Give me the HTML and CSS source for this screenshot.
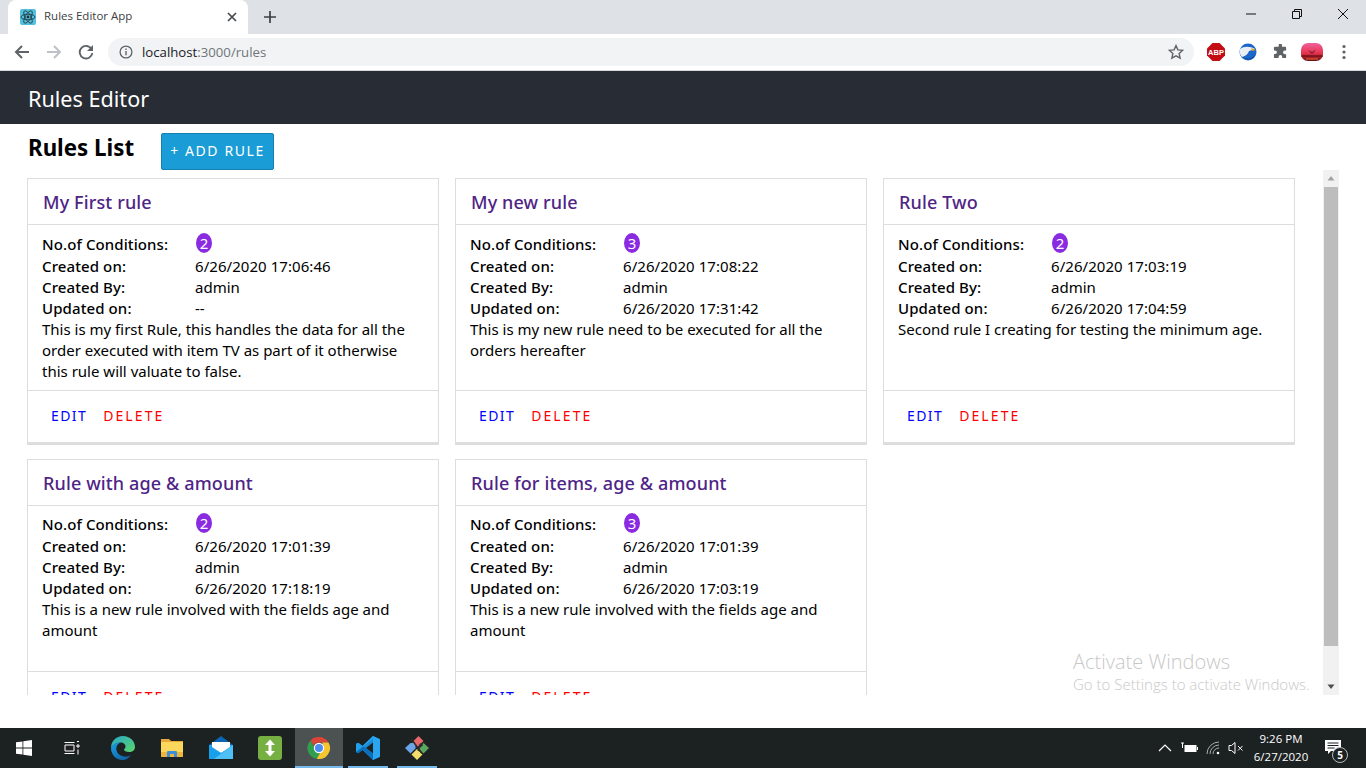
FILE: index.html
```html
<!DOCTYPE html>
<html lang="en">
<head>
<meta charset="utf-8">
<title>Rules Editor App</title>
<link rel="stylesheet" href="styles.css">
</head>
<body>
<div class="tabstrip">
  <div class="tab">
    <svg class="favicon" viewBox="0 0 16 16"><rect width="16" height="16" rx="2" fill="#53c1de"/><g fill="none" stroke="#20343c" stroke-width=".8"><ellipse cx="8" cy="8" rx="7" ry="2.8"/><ellipse cx="8" cy="8" rx="7" ry="2.8" transform="rotate(60 8 8)"/><ellipse cx="8" cy="8" rx="7" ry="2.8" transform="rotate(120 8 8)"/></g><circle cx="8" cy="8" r="1.4" fill="#20343c"/></svg>
    <span class="tab-title">Rules Editor App</span>
    <svg class="tab-close" viewBox="0 0 10 10"><path d="M1 1l8 8M9 1l-8 8" stroke="#45494d" stroke-width="1.7" fill="none"/></svg>
  </div>
  <svg class="newtab" viewBox="0 0 12 12"><path d="M6 0v12M0 6h12" stroke="#3c4043" stroke-width="1.7" fill="none"/></svg>
  <div class="winctrls">
    <svg class="winbtn" viewBox="0 0 12 12"><path d="M1 6h10" stroke="#111" stroke-width="1" fill="none"/></svg>
    <svg class="winbtn" viewBox="0 0 12 12"><path d="M1.5 3.5h7v7h-7zM3.5 3.5v-2h7v7h-2" stroke="#111" stroke-width="1" fill="none"/></svg>
    <svg class="winbtn" viewBox="0 0 12 12"><path d="M1 1l10 10M11 1l-10 10" stroke="#111" stroke-width="1" fill="none"/></svg>
  </div>
</div>
<div class="toolbar">
  <svg class="navicon" viewBox="0 0 16 16"><path d="M15 8H2.5M8 2L2 8l6 6" stroke="#5f6368" stroke-width="2" fill="none"/></svg>
  <svg class="navicon" viewBox="0 0 16 16"><path d="M1 8h12.5M8 2l6 6-6 6" stroke="#bdc1c6" stroke-width="2" fill="none"/></svg>
  <svg class="navicon" viewBox="0 0 16 16"><path d="M13.6 5.2A6.3 6.3 0 1 0 14.3 9" stroke="#5f6368" stroke-width="1.9" fill="none"/><path d="M15 1v6H9z" fill="#5f6368"/></svg>
  <div class="omnibox">
    <svg class="info" viewBox="0 0 14 14"><circle cx="7" cy="7" r="5.9" stroke="#5f6368" stroke-width="1.3" fill="none"/><path d="M7 6v4.2M7 3.6v1.4" stroke="#5f6368" stroke-width="1.4"/></svg>
    <span class="url"><span class="url-host">localhost</span>:3000/rules</span>
    <svg class="star" viewBox="0 0 16 16"><path d="M8 1.6l1.9 4.3 4.7.5-3.5 3.1 1 4.6L8 11.8l-4.1 2.3 1-4.6L1.4 6.4l4.7-.5z" stroke="#5f6368" stroke-width="1.4" fill="none"/></svg>
  </div>
  <div class="exts">
    <svg class="ext" viewBox="0 0 18 18"><path d="M5.5 0h7L18 5.5v7L12.5 18h-7L0 12.5v-7z" fill="#c30d12"/><text x="9" y="12" class="abp">ABP</text></svg>
    <svg class="ext" viewBox="0 0 18 18"><circle cx="9" cy="9" r="8.5" fill="#1b66c9"/><path d="M1 6c4-3 10-3 15 0l-6 2c-1 3-3 5-7 6-2-2-3-5-2-8z" fill="#e9eef5"/><path d="M12 5l5 2-4 1z" fill="#e8a21a"/><path d="M4 14c3 2 8 3 12-2-2 5-9 6-12 2z" fill="#0c3a86"/></svg>
    <svg class="ext puzzle" viewBox="0 0 16 16"><path d="M6 1.5a1.8 1.8 0 0 1 3.6 0V3H13a1 1 0 0 1 1 1v3h-1.4a1.9 1.9 0 0 0 0 3.8H14V14a1 1 0 0 1-1 1H9.8v-1.4a1.9 1.9 0 0 0-3.8 0V15H2a1 1 0 0 1-1-1v-3.4h1.3a1.9 1.9 0 0 0 0-3.8H1V4a1 1 0 0 1 1-1h4z" fill="#5f6368"/></svg>
    <svg class="ext avatar" viewBox="0 0 22 18"><defs><linearGradient id="sky" x1="0" y1="0" x2="0" y2="1"><stop offset="0" stop-color="#f0609f"/><stop offset=".5" stop-color="#e83a58"/><stop offset=".72" stop-color="#c9232f"/><stop offset="1" stop-color="#5c1015"/></linearGradient></defs><rect width="22" height="18" rx="7" fill="url(#sky)"/><path d="M0 12.500h22v1H0z" fill="#3d0c12"/><path d="M7 7l4 2 4-2.500-3 4h-2z" fill="#8c1c34"/><path d="M5 15.500h12v1H5z" fill="#f06a3a"/></svg>
    <svg class="ext dots" viewBox="0 0 4 16"><circle cx="2" cy="2.5" r="1.6" fill="#5f6368"/><circle cx="2" cy="8" r="1.6" fill="#5f6368"/><circle cx="2" cy="13.5" r="1.6" fill="#5f6368"/></svg>
  </div>
</div>
<header class="app-header">Rules Editor</header>
<main class="content">
  <div class="title-row">
    <h1 class="page-title">Rules List</h1>
    <button class="add-btn">+ ADD RULE</button>
  </div>
  <div class="scroll-row">
    <div class="cards">
      <article class="card">
        <h2 class="card-title">My First rule</h2>
        <div class="card-body">
          <div class="row first"><span class="label">No.of Conditions:</span><span class="badge">2</span></div>
          <div class="row"><span class="label">Created on:</span><span class="date">6/26/2020 17:06:46</span></div>
          <div class="row"><span class="label">Created By:</span><span>admin</span></div>
          <div class="row"><span class="label">Updated on:</span><span>--</span></div>
          <p class="desc">This is my first Rule, this handles the data for all the order executed with item TV as part of it otherwise this rule will valuate to false.</p>
        </div>
        <div class="card-foot"><a class="edit">EDIT</a><a class="del">DELETE</a></div>
      </article>
      <article class="card">
        <h2 class="card-title">My new rule</h2>
        <div class="card-body">
          <div class="row first"><span class="label">No.of Conditions:</span><span class="badge">3</span></div>
          <div class="row"><span class="label">Created on:</span><span class="date">6/26/2020 17:08:22</span></div>
          <div class="row"><span class="label">Created By:</span><span>admin</span></div>
          <div class="row"><span class="label">Updated on:</span><span class="date">6/26/2020 17:31:42</span></div>
          <p class="desc">This is my new rule need to be executed for all the orders hereafter</p>
        </div>
        <div class="card-foot"><a class="edit">EDIT</a><a class="del">DELETE</a></div>
      </article>
      <article class="card">
        <h2 class="card-title">Rule Two</h2>
        <div class="card-body">
          <div class="row first"><span class="label">No.of Conditions:</span><span class="badge">2</span></div>
          <div class="row"><span class="label">Created on:</span><span class="date">6/26/2020 17:03:19</span></div>
          <div class="row"><span class="label">Created By:</span><span>admin</span></div>
          <div class="row"><span class="label">Updated on:</span><span class="date">6/26/2020 17:04:59</span></div>
          <p class="desc">Second rule I creating for testing the minimum age.</p>
        </div>
        <div class="card-foot"><a class="edit">EDIT</a><a class="del">DELETE</a></div>
      </article>
      <article class="card">
        <h2 class="card-title">Rule with age &amp; amount</h2>
        <div class="card-body">
          <div class="row first"><span class="label">No.of Conditions:</span><span class="badge">2</span></div>
          <div class="row"><span class="label">Created on:</span><span class="date">6/26/2020 17:01:39</span></div>
          <div class="row"><span class="label">Created By:</span><span>admin</span></div>
          <div class="row"><span class="label">Updated on:</span><span class="date">6/26/2020 17:18:19</span></div>
          <p class="desc">This is a new rule involved with the fields age and amount</p>
        </div>
        <div class="card-foot"><a class="edit">EDIT</a><a class="del">DELETE</a></div>
      </article>
      <article class="card">
        <h2 class="card-title">Rule for items, age &amp; amount</h2>
        <div class="card-body">
          <div class="row first"><span class="label">No.of Conditions:</span><span class="badge">3</span></div>
          <div class="row"><span class="label">Created on:</span><span class="date">6/26/2020 17:01:39</span></div>
          <div class="row"><span class="label">Created By:</span><span>admin</span></div>
          <div class="row"><span class="label">Updated on:</span><span class="date">6/26/2020 17:03:19</span></div>
          <p class="desc">This is a new rule involved with the fields age and amount</p>
        </div>
        <div class="card-foot"><a class="edit">EDIT</a><a class="del">DELETE</a></div>
      </article>
    </div>
    <div class="scrollbar">
      <svg class="arrow" viewBox="0 0 16 16"><path d="M4.5 10L8 5.5l3.500 4.500z" fill="#a3a3a3"/></svg>
      <div class="thumb"></div>
      <svg class="arrow arrow-down" viewBox="0 0 16 16"><path d="M4.500 6L8 10.500 11.500 6z" fill="#505050"/></svg>
    </div>
  </div>
  <div class="activate">
    <div class="activate-big">Activate Windows</div>
    <div class="activate-small">Go to Settings to activate Windows.</div>
  </div>
</main>
<footer class="taskbar">
  <div class="task-left">
    <div class="tb-item"><svg class="tb-16" viewBox="0 0 16 16"><path d="M0 2.300l6.500-.9v6.200H0zM7.300 1.300L16 0v7.600H7.300zM0 8.400h6.500v6.200L0 13.700zM7.300 8.400H16V16l-8.700-1.200z" fill="#fff"/></svg></div>
    <div class="tb-item"><svg class="tb-16" viewBox="0 0 16 16"><path d="M.5 2.500h10M.5 13.500h10M1 5h9v6H1zM13 1.500h2M13 5h2v2h-2zM14 9.500v5" stroke="#fff" stroke-width="1" fill="none"/></svg></div>
    <div class="tb-gap"></div>
    <div class="tb-item"><svg class="tb-24" viewBox="0 0 24 24"><defs><linearGradient id="eb" x1="0" y1="0" x2="1" y2="1"><stop offset="0" stop-color="#1b9de2"/><stop offset="1" stop-color="#0c5a9e"/></linearGradient><linearGradient id="eg" x1="0" y1="0" x2="1" y2="1"><stop offset="0" stop-color="#2aa8c8"/><stop offset="1" stop-color="#5ad66a"/></linearGradient></defs><path d="M12 0c7 0 12 5 12 11 0 3-2.500 5-6 5-3 0-5-1-5-2.500 0-1 1.500-1 1.500-3C14.500 8 12 6.500 9.500 6.500 5 6.500 1 9.500 0 12 0 5 5 0 12 0z" fill="url(#eg)"/><path d="M0 12c1-3 5-6 9.500-5.500C6 8 5 11 5.500 14c.7 4 4.500 6.500 9 6.500 2 0 3.700-.5 5.500-1.500-2 3-5 5-8.500 5C5 24 0 18.500 0 12z" fill="url(#eb)"/></svg></div>
    <div class="tb-item"><svg class="tb-24" viewBox="0 0 24 24"><path d="M1 3h8l2 2h12v3H1z" fill="#e8a93a"/><path d="M1 6h22v14a1 1 0 0 1-1 1H2a1 1 0 0 1-1-1z" fill="#fbd75b"/><path d="M1 16h22v4a1 1 0 0 1-1 1H2a1 1 0 0 1-1-1z" fill="#eeb53e"/><path d="M7 21v-5a1 1 0 0 1 1-1h8a1 1 0 0 1 1 1v5h-3v-3h-4v3z" fill="#3f8fd8"/></svg></div>
    <div class="tb-item"><svg class="tb-24" viewBox="0 0 24 24"><path d="M0 9l12-9 12 9v1H0z" fill="#0c66b5"/><path d="M0 9h24v14H0z" fill="#2aa3ee"/><path d="M3 6h18v6l-9 5-9-5z" fill="#fff"/><path d="M0 9l12 8 12-8v14H0z" fill="#18a0ec"/><path d="M24 9v14H5z" fill="#4fc0f6"/></svg></div>
    <div class="tb-item"><svg class="tb-24" viewBox="0 0 24 24"><rect width="24" height="24" rx="3" fill="#76b043"/><path d="M12 3.500l5 5.500h-3.500v6H17l-5 5.500L7 15h3.500V9H7z" fill="#fff"/></svg></div>
    <div class="tb-item active"><svg class="tb-24" viewBox="0 0 24 24"><path d="M12 1a11 11 0 0 1 9.500 5.500H12a5.500 5.500 0 0 0-5.200 3.700L3.400 4.400A11 11 0 0 1 12 1z" fill="#db4437"/><path d="M3.400 4.400l5 8.600a5.500 5.500 0 0 0 4.700 4.400l-3.400 5.400A11 11 0 0 1 3.400 4.400z" fill="#2f9e4f"/><path d="M21.500 6.500A11 11 0 0 1 9.700 22.800l5-8.600a5.500 5.500 0 0 0 .2-7.700z" fill="#f7c530"/><circle cx="12" cy="12" r="5.200" fill="#fff"/><circle cx="12" cy="12" r="4" fill="#4d8cf0"/></svg></div>
    <div class="tb-item lit"><svg class="tb-24" viewBox="0 0 24 24"><path d="M17 0l7 3.200v17.600L17 24 6.500 14 2.200 17.300 0 16V8l2.200-1.300L6.500 10z" fill="#1a8cd8"/><path d="M17 6.500L10 12l7 5.500z" fill="#1c2122"/><path d="M0 8l2.200-1.300L17 17.500V24L6.500 14 2.200 17.300 0 16z" fill="#0a6fb8"/><path d="M0 16l17-13V0L6.500 10 2.200 6.700 0 8z" fill="#23a0ec"/><path d="M17 0l7 3.200v17.600L17 24z" fill="#2ba5ef"/></svg></div>
    <div class="tb-item lit"><svg class="tb-24" viewBox="0 0 24 24"><path d="M10.500 7L5.500 7 0 12l5.500 5.500 5-5z" fill="#6ba5e8"/><path d="M12 11.500l6.500-6.500-5-5-6 6z" fill="#e8686c"/><path d="M13 12.500l5.500-5.500L24 12l-5.500 5.500z" fill="#5aa860"/><path d="M12 13l5.500 5.500L12 24l-5.500-5.500z" fill="#f2dc6a"/><path d="M6 2.500l11 15" stroke="#2a2a2a" stroke-width="1.500"/><circle cx="16" cy="9" r="1.800" fill="#2a2a2a"/><path d="M16 9l-3 6" stroke="#2a2a2a" stroke-width="1.200"/></svg></div>
  </div>
  <div class="task-right">
    <svg class="tray chev" viewBox="0 0 14 14"><path d="M1 10l6-6 6 6" stroke="#fff" stroke-width="1.200" fill="none"/></svg>
    <svg class="tray batt" viewBox="0 0 18 12"><path d="M1 1h3M2.500 1v5" stroke="#fff" stroke-width="1" fill="none"/><rect x="4.500" y="3" width="12" height="7" fill="#fff"/><path d="M17 5h1v3h-1z" fill="#fff"/></svg>
    <svg class="tray wifi" viewBox="0 0 16 14"><path d="M1 13a12 12 0 0 1 12-12M4 13a9 9 0 0 1 9-9M7 13a6 6 0 0 1 6-6" stroke="#a9adad" stroke-width="1" fill="none"/><circle cx="12" cy="12" r="1.300" fill="#fff"/></svg>
    <svg class="tray vol" viewBox="0 0 16 14"><path d="M1 4.500h2.500L7 1.500v11l-3.500-3H1z" stroke="#fff" stroke-width="1" fill="none"/><path d="M10 5l4.500 4.500M14.500 5L10 9.500" stroke="#fff" stroke-width="1"/></svg>
    <div class="clock"><div>9:26 PM</div><div>6/27/2020</div></div>
    <div class="notify">
      <svg class="notify-icon" viewBox="0 0 16 15"><path d="M0 0h16v11H6l-3 3v-3H0z" fill="#fff"/><path d="M2.500 3h11M2.500 5.500h11M2.500 8h7" stroke="#1c2122" stroke-width="1"/></svg>
      <span class="notify-badge">5</span>
    </div>
  </div>
</footer>
</body>
</html>
```
FILE: styles.css
```css
* { box-sizing: border-box; }
html, body { margin: 0; height: 768px; overflow: hidden; }
body { display: flex; flex-direction: column; background: #fff; font-family: "Noto Sans", "Open Sans", sans-serif; color: #000; }

.tabstrip { height: 34px; background: #dee1e6; display: flex; align-items: flex-end; padding-left: 8px; flex: none; }
.tab { width: 240px; height: 34px; background: #fff; border-radius: 8px 8px 0 0; display: flex; align-items: center; padding: 0 11px 0 12px; }
.favicon { width: 16px; height: 16px; flex: none; }
.tab-title { font: 11.500px/14px "Open Sans", sans-serif; color: #3c4043; margin: 0 0 2px 8px; flex: 1; }
.tab-close { width: 10px; height: 10px; flex: none; }
.newtab { width: 12px; height: 12px; margin: 0 0 11px 16px; flex: none; }
.winctrls { margin-left: auto; height: 34px; display: flex; align-items: flex-start; padding: 8px 17px 0 0; gap: 34px; }
.winbtn { width: 12px; height: 12px; flex: none; }

.toolbar { height: 37px; flex: none; background: #fff; border-bottom: 1px solid #d6d8dc; display: flex; align-items: center; padding: 0 0 1px 14px; }
.navicon { width: 16px; height: 16px; margin-right: 16px; flex: none; }
.omnibox { width: 1086px; height: 28px; margin-left: -2px; background: #f1f3f4; border-radius: 14px; display: flex; align-items: center; padding: 0 10px 0 11px; }
.info { width: 14px; height: 14px; flex: none; }
.url { font: 13.200px "Open Sans", sans-serif; color: #70757a; margin-left: 9px; flex: 1; }
.url-host { color: #202124; }
.star { width: 16px; height: 16px; flex: none; }
.exts { display: flex; align-items: center; margin-left: 13px; }
.ext { width: 18px; height: 18px; margin-right: 14px; flex: none; }
.abp { font: bold 7.500px "Liberation Sans", sans-serif; fill: #fff; text-anchor: middle; }
.puzzle { width: 15px; height: 15px; margin-left: 2px; margin-right: 15px; }
.avatar { width: 22px; margin-left: -2px; margin-right: 19px; }
.dots { width: 4px; height: 16px; margin: 0; }

.app-header { height: 53px; flex: none; background: #282c34; color: #fff; font-size: 21.600px; line-height: 56px; padding-left: 28px; }

.content { flex: 1; min-height: 0; position: relative; display: flex; flex-direction: column; }
.title-row { height: 46px; flex: none; display: flex; padding: 9px 0 0 28px; }
.page-title { margin: 0; width: 133px; font-size: 22.300px; font-weight: 700; line-height: 30px; }
.add-btn { width: 113px; height: 37px; background: #1a9cd6; color: #fff; border: 1px solid #157fad; border-radius: 2px; font: 14px/32px "Noto Sans", sans-serif; letter-spacing: 1.600px; padding: 0 0 2px; }

.scroll-row { height: 525px; flex: none; display: flex; padding-left: 27px; width: 1339px; }
.cards { flex: 1; overflow: hidden; padding-top: 8px; display: grid; grid-template-columns: repeat(3, 412px); gap: 14px 16px; align-content: start; }
.card { height: 267px; border: 1px solid #ddd; border-bottom: 3px solid #ddd; display: flex; flex-direction: column; }
.card-title { margin: 0; height: 46px; flex: none; padding-left: 15px; border-bottom: 1px solid #ddd; font-size: 18px; font-weight: 500; letter-spacing: .13px; line-height: 46px; color: #4f2486; }
.card-body { height: 165px; flex: none; padding: 9px 14px 0; font-size: 15px; line-height: 21px; }
.card:nth-child(n+4) .card-body { padding-top: 8px; }
.row { display: flex; height: 21px; }
.row.first { height: 22px; align-items: flex-start; }
.label { width: 153px; flex: none; font-weight: 500; letter-spacing: .1px; }
.date { letter-spacing: .06px; }
.badge { width: 16px; height: 20px; margin: -1px 0 0 1px; border-radius: 50%; background: #8a2be2; color: #fff; font-size: 15px; line-height: 20px; text-align: center; }
.desc { margin: 0; }
.card-foot { flex: 1; border-top: 1px solid #ddd; display: flex; align-items: center; padding: 0 0 2px 23px; gap: 16px; font-size: 14px; letter-spacing: 1.400px; }
.edit { color: #0000ff; }
.del { color: #ff0000; letter-spacing: 2.100px; }

.scrollbar { width: 16px; flex: none; background: #f1f1f1; margin-left: 12px; display: flex; flex-direction: column; }
.arrow { width: 16px; height: 17px; flex: none; }
.arrow-down { margin-top: auto; }
.thumb { height: 459px; flex: none; margin: 0 1px; background: #bdbdbd; }

.activate { position: absolute; left: 1073px; top: 526px; color: #c8c8c8; }
.activate-big { font: 300 20px/24px "Open Sans", sans-serif; }
.activate-small { font: 300 15px/21px "Open Sans", sans-serif; }

.taskbar { height: 40px; flex: none; background: #1c2122; display: flex; justify-content: space-between; }
.task-left { display: flex; }
.tb-item { width: 48px; height: 40px; display: flex; align-items: center; justify-content: center; flex: none; margin-right: 1px; position: relative; }
.tb-item:nth-child(1), .tb-item:nth-child(2) { margin-right: 0; }
.tb-gap { width: 3px; }
.tb-16 { width: 16px; height: 16px; }
.tb-24 { width: 24px; height: 24px; }
.active { background: #4c5151; }
.active::after, .lit::after { content: ""; position: absolute; bottom: 0; height: 2px; background: #76b9ed; left: 0; right: 0; }
.lit::after { left: 4px; right: 4px; }
.task-right { display: flex; align-items: center; padding-right: 17px; }
.tray { flex: none; }
.chev { width: 14px; height: 14px; margin-right: 8px; }
.batt { width: 18px; height: 12px; margin-right: 8px; }
.wifi { width: 16px; height: 14px; margin-right: 6px; }
.vol { width: 16px; height: 14px; }
.clock { width: 80px; margin-left: -3px; color: #fff; font: 11.500px/18px "Open Sans", sans-serif; text-align: center; }
.notify { position: relative; width: 24px; height: 24px; margin-left: 4px; }
.notify-icon { position: absolute; left: 0; top: 4px; width: 16px; height: 15px; }
.notify-badge { position: absolute; left: 7px; top: 11px; width: 16px; height: 16px; border-radius: 50%; border: 1px solid #bbb; background: #1c2122; color: #fff; font: bold 10px/14px "Open Sans", sans-serif; text-align: center; }
```
